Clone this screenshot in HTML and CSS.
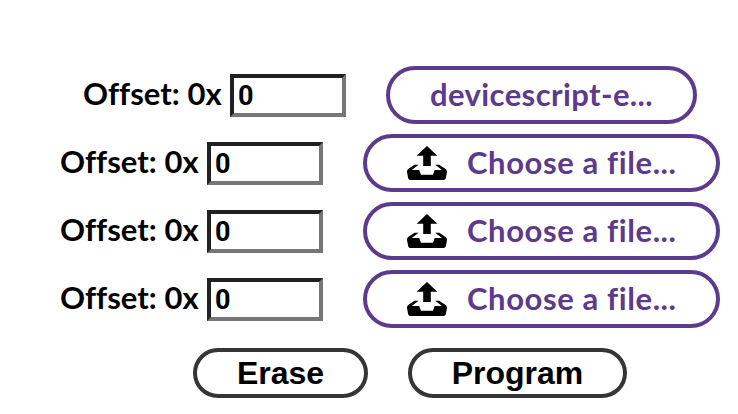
FILE: index.html
```html
<!DOCTYPE html>
<html lang="en">
<head>
<meta charset="utf-8">
<title>Flash</title>
<link rel="stylesheet" href="styles.css">
</head>
<body>
<svg class="defs" aria-hidden="true"><symbol id="upload" viewBox="0 0 20 17"><path d="M10 0l-5.2 4.9h3.3v5.1h3.8v-5.1h3.3l-5.2-4.9zm9.3 11.5l-3.2-2.1h-2l3.4 2.6h-3.5c-.1 0-.2.1-.2.1l-.8 2.3h-6l-.8-2.2c-.1-.1-.1-.2-.2-.2h-3.6l3.4-2.6h-2l-3.2 2.1c-.4.3-.7 1-.6 1.5l.6 3.1c.1.5.7.9 1.2.9h16.3c.6 0 1.1-.4 1.3-.9l.6-3.1c.1-.5-.2-1.2-.7-1.5z"/></symbol></svg>
<main class="rows">
  <div class="row"><label class="offset"><span class="offset-text">Offset: 0x</span><input class="address" value="0"></label><button class="file chosen"><span class="name">devicescript-e...</span></button></div>
  <div class="row"><label class="offset"><span class="offset-text">Offset: 0x</span><input class="address" value="0"></label><button class="file"><svg class="icon"><use href="#upload"/></svg><span class="choose">Choose a file...</span></button></div>
  <div class="row"><label class="offset"><span class="offset-text">Offset: 0x</span><input class="address" value="0"></label><button class="file"><svg class="icon"><use href="#upload"/></svg><span class="choose">Choose a file...</span></button></div>
  <div class="row"><label class="offset"><span class="offset-text">Offset: 0x</span><input class="address" value="0"></label><button class="file"><svg class="icon"><use href="#upload"/></svg><span class="choose">Choose a file...</span></button></div>
</main>
<div class="actions"><button class="action erase">Erase</button><button class="action program">Program</button></div>
</body>
</html>
```
FILE: styles.css
```css
* { box-sizing: border-box; }
body { margin: 0; background: #fff; color: #000; font: 700 31px/38px Lato, sans-serif; overflow: hidden; }
.defs { display: none; }
.rows { display: flex; flex-direction: column; gap: 10px; padding: 66px 0 0 42px; }
.row { display: flex; justify-content: center; gap: 40px; height: 58px; }
.offset { display: flex; align-items: flex-start; padding-top: 8px; }
.offset-text { width: 147px; white-space: nowrap; letter-spacing: 0.03px; }
.address { width: 116px; height: 43px; margin: 0; padding: 0 4px; border: 4px solid; border-color: #212121 #767676 #767676 #212121; border-radius: 0; background: #fff; color: #000; font: 700 27px/35px Roboto, sans-serif; outline: 0; }
.file { display: flex; align-items: center; width: 357px; height: 58px; padding: 0 0 2px 40px; border: 4px solid #5c3a8c; border-radius: 29px; background: #fff; color: #5c3a8c; font: inherit; white-space: nowrap; }
.file.chosen { width: 311px; }
.name { letter-spacing: 0.4px; }
.choose { letter-spacing: 0.6px; }
.icon { width: 40px; height: 34px; margin: 2px 20px 0 0; fill: #000; flex: none; }
.actions { display: flex; gap: 40px; padding: 20px 0 0 193px; }
.action { height: 50px; padding: 0; border: 4px solid #353535; border-radius: 25px; background: #fff; color: #000; font: 700 32px/40px "Liberation Sans", Arial, sans-serif; }
.erase { width: 175px; }
.program { width: 219px; }
```
